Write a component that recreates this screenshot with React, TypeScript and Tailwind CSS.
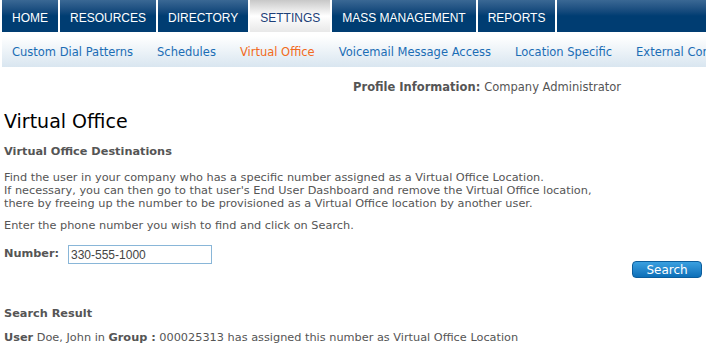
import React from "react";

const top = ["HOME", "RESOURCES", "DIRECTORY", "SETTINGS", "MASS MANAGEMENT", "REPORTS"];
const sub = [
  { t: "Custom Dial Patterns" },
  { t: "Schedules" },
  { t: "Virtual Office", active: true },
  { t: "Voicemail Message Access" },
  { t: "Location Specific" },
  { t: "External Contacts" },
];

export default function App() {
  return (
    <div className="w-[706px] h-[344px] overflow-hidden bg-white text-[11.3px] text-[#555]" style={{ fontFamily: "'DejaVu Sans', Verdana, sans-serif" }}>
      <div className="flex h-[32px] pl-[2px] gap-[2px] bg-white">
        {top.map((t) => (
          <div
            key={t}
            className={
              "px-[10px] flex items-center text-[12px] pt-[3px] " +
              (t === "SETTINGS"
                ? "bg-gradient-to-b from-[#c8c8c8] via-[#ffffff] to-[#e8e8e8] text-[#1d3f78]"
                : "bg-gradient-to-b from-[#3a6894] via-[#003d72] to-[#003d72] text-white")
            }
            style={{ fontFamily: "'Liberation Sans', Arial, sans-serif" }}
          >
            {t}
          </div>
        ))}
        <div className="flex-1 bg-gradient-to-b from-[#3a6894] via-[#003d72] to-[#003d72]" />
      </div>
      <div className="mt-[4px] ml-[2px] h-[31px] flex items-center pl-[10px] gap-[24px] bg-gradient-to-b from-[#ffffff] to-[#d9e6f0] whitespace-nowrap text-[11.5px] pt-[3px]">
        {sub.map((s) => (
          <span key={s.t} className={s.active ? "text-[#f26a21]" : "text-[#1b6db5]"}>{s.t}</span>
        ))}
      </div>
      <div className="flex justify-end pr-[85px] mt-[13px] text-[11.5px] leading-[14px]">
        <span className="font-bold mr-[4px]">Profile Information:</span>
        <span>Company Administrator</span>
      </div>
      <div className="px-[4px]">
        <h1 className="text-[19px] text-black mt-[15px] leading-[24px]">Virtual Office</h1>
        <div className="font-bold mt-[12px] leading-[13px]">Virtual Office Destinations</div>
        <p className="mt-[13px] leading-[13px]">
          Find the user in your company who has a specific number assigned as a Virtual Office Location.<br />
          If necessary, you can then go to that user's End User Dashboard and remove the Virtual Office location,<br />
          there by freeing up the number to be provisioned as a Virtual Office location by another user.
        </p>
        <p className="mt-[9px] leading-[13px]">Enter the phone number you wish to find and click on Search.</p>
        <div className="flex items-center mt-[13px]">
          <span className="font-bold w-[64px]">Number:</span>
          <div className="w-[144px] h-[19px] border border-[#89b6d8] flex items-center px-[2px] text-[12px] text-[#444]" style={{ fontFamily: "'Liberation Sans', Arial, sans-serif" }}>330-555-1000</div>
        </div>
        <div className="flex justify-end -mt-[3px]">
          <div className="w-[70px] h-[17px] rounded-[4px] bg-gradient-to-b from-[#3aa0e0] to-[#0b6fb8] border border-[#0c5d9c] text-white text-[12px] flex items-center justify-center">Search</div>
        </div>
        <div className="font-bold mt-[29px] leading-[13px]">Search Result</div>
        <div className="mt-[11px] leading-[13px]">
          <span className="font-bold">User</span> Doe, John in <span className="font-bold">Group :</span> 000025313 has assigned this number as Virtual Office Location
        </div>
      </div>
    </div>
  );
}
